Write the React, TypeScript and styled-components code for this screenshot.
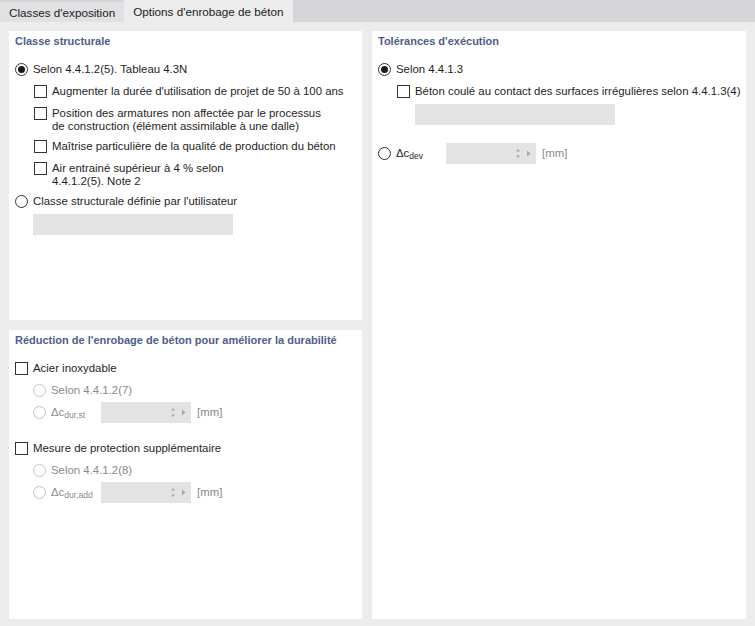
import styled, { createGlobalStyle } from "styled-components";

const GlobalStyle = createGlobalStyle`
  html, body {
    margin: 0;
    padding: 0;
  }
  body {
    background: #ececec;
    font-family: "Liberation Sans", Arial, sans-serif;
    font-size: 11px;
    color: #1e1e1e;
  }
`;

const Page = styled.div`
  width: 755px;
  height: 626px;
  display: flex;
  flex-direction: column;
  background: #ececec;
`;

const TabBar = styled.div`
  height: 22px;
  flex-shrink: 0;
  display: flex;
  align-items: flex-end;
  background: #d4d4d9;
`;

const Tab = styled.div<{ $active?: boolean }>`
  height: ${(p) => (p.$active ? 22 : 20)}px;
  padding: 0 9px;
  display: flex;
  align-items: center;
  box-sizing: border-box;
  background: ${(p) => (p.$active ? "#ececec" : "#e1e1e3")};
  color: #1a1a1a;
  font-size: 11.7px;
`;

const Body = styled.div`
  flex: 1;
  display: grid;
  grid-template-columns: 353px 374px;
  column-gap: 10px;
  padding: 9px 9px 7px 9px;
  min-height: 0;
`;

const Column = styled.div`
  display: flex;
  flex-direction: column;
  gap: 10px;
  min-height: 0;
`;

const Panel = styled.section`
  flex: 1;
  background: #ffffff;
  padding: 1px 6px;
`;

const PanelTitle = styled.div`
  font-weight: bold;
  color: #4f5d87;
  line-height: 18px;
  margin-bottom: 8px;
  white-space: nowrap;
`;

const Option = styled.div<{ $indent?: number; $disabled?: boolean }>`
  display: flex;
  align-items: flex-start;
  gap: 5px;
  min-height: 22px;
  box-sizing: border-box;
  padding: 5px 0 2px;
  margin-left: ${(p) => p.$indent ?? 0}px;
  line-height: 13px;
  font-size: 11.4px;
  white-space: nowrap;
  color: ${(p) => (p.$disabled ? "#8a8a8a" : "#1e1e1e")};
`;

const Radio = styled.span<{ $checked?: boolean; $disabled?: boolean }>`
  width: 13px;
  height: 13px;
  flex-shrink: 0;
  box-sizing: border-box;
  border-radius: 50%;
  border: 1px solid ${(p) => (p.$disabled ? "#c2c2c2" : "#333333")};
  background: #fff;
  display: flex;
  align-items: center;
  justify-content: center;

  &::after {
    content: "";
    display: ${(p) => (p.$checked ? "block" : "none")};
    width: 7px;
    height: 7px;
    border-radius: 50%;
    background: #1a1a1a;
  }
`;

const Check = styled.span`
  width: 13px;
  height: 13px;
  flex-shrink: 0;
  box-sizing: border-box;
  border: 1px solid #333333;
  background: #fff;
`;

const Field = styled.div<{ $indent?: number; $gapTop?: number }>`
  width: 200px;
  height: 21px;
  margin-left: ${(p) => p.$indent ?? 0}px;
  margin-top: ${(p) => p.$gapTop ?? 2}px;
  background: #e3e3e3;
`;

const DeltaRow = styled.div<{ $indent?: number; $gapTop?: number; $disabled?: boolean }>`
  display: flex;
  align-items: center;
  gap: 5px;
  height: 22px;
  font-size: 11.4px;
  margin-left: ${(p) => p.$indent ?? 0}px;
  margin-top: ${(p) => p.$gapTop ?? 0}px;
  color: ${(p) => (p.$disabled ? "#8a8a8a" : "#1e1e1e")};
`;

const DeltaLabel = styled.span`
  width: 45px;
  white-space: nowrap;
`;

const Sub = styled.span`
  font-size: 8.5px;
  position: relative;
  top: 2px;
`;

const SpinBox = styled.div`
  width: 90px;
  height: 21px;
  background: #e3e3e3;
  display: flex;
  align-items: center;
  justify-content: flex-end;
`;

const Unit = styled.span`
  margin-left: 1px;
  color: #8a8a8a;
`;

const Group = styled.div<{ $gapTop?: number }>`
  margin-top: ${(p) => p.$gapTop ?? 0}px;
`;

const SpinArrows = () => (
  <svg width="24" height="21" viewBox="0 0 24 21">
    <path d="M4 8.5 L6 6 L8 8.5 Z" fill="#a8a8a8" />
    <path d="M4 12.5 L6 15 L8 12.5 Z" fill="#a8a8a8" />
    <path d="M15 7.5 L18.5 10.5 L15 13.5 Z" fill="#a8a8a8" />
  </svg>
);

const Delta = ({ sub }: { sub: string }) => (
  <DeltaLabel>
    Δc<Sub>{sub}</Sub>
  </DeltaLabel>
);

const App = () => {
  return (
    <Page>
      <GlobalStyle />
      <TabBar>
        <Tab>Classes d'exposition</Tab>
        <Tab $active>Options d'enrobage de béton</Tab>
      </TabBar>
      <Body>
        <Column>
          <Panel>
            <PanelTitle>Classe structurale</PanelTitle>
            <Option>
              <Radio $checked />
              <span>Selon 4.4.1.2(5). Tableau 4.3N</span>
            </Option>
            <Option $indent={19}>
              <Check />
              <span>Augmenter la durée d'utilisation de projet de 50 à 100 ans</span>
            </Option>
            <Option $indent={19}>
              <Check />
              <span>
                Position des armatures non affectée par le processus
                <br />
                de construction (élément assimilable à une dalle)
              </span>
            </Option>
            <Option $indent={19}>
              <Check />
              <span>Maîtrise particulière de la qualité de production du béton</span>
            </Option>
            <Option $indent={19}>
              <Check />
              <span>
                Air entrainé supérieur à 4 % selon
                <br />
                4.4.1.2(5). Note 2
              </span>
            </Option>
            <Option>
              <Radio />
              <span>Classe structurale définie par l'utilisateur</span>
            </Option>
            <Field $indent={18} />
          </Panel>
          <Panel>
            <PanelTitle>Réduction de l'enrobage de béton pour améliorer la durabilité</PanelTitle>
            <Option>
              <Check />
              <span>Acier inoxydable</span>
            </Option>
            <Option $indent={18} $disabled>
              <Radio $disabled />
              <span>Selon 4.4.1.2(7)</span>
            </Option>
            <DeltaRow $indent={18} $disabled>
              <Radio $disabled />
              <Delta sub="dur,st" />
              <SpinBox>
                <SpinArrows />
              </SpinBox>
              <Unit>[mm]</Unit>
            </DeltaRow>
            <Group $gapTop={14}>
              <Option>
                <Check />
                <span>Mesure de protection supplémentaire</span>
              </Option>
              <Option $indent={18} $disabled>
                <Radio $disabled />
                <span>Selon 4.4.1.2(8)</span>
              </Option>
              <DeltaRow $indent={18} $disabled>
                <Radio $disabled />
                <Delta sub="dur,add" />
                <SpinBox>
                  <SpinArrows />
                </SpinBox>
                <Unit>[mm]</Unit>
              </DeltaRow>
            </Group>
          </Panel>
        </Column>
        <Column>
          <Panel>
            <PanelTitle>Tolérances d'exécution</PanelTitle>
            <Option>
              <Radio $checked />
              <span>Selon 4.4.1.3</span>
            </Option>
            <Option $indent={19}>
              <Check />
              <span>Béton coulé au contact des surfaces irrégulières selon 4.4.1.3(4)</span>
            </Option>
            <Field $indent={37} />
            <DeltaRow $gapTop={17}>
              <Radio />
              <Delta sub="dev" />
              <SpinBox>
                <SpinArrows />
              </SpinBox>
              <Unit>[mm]</Unit>
            </DeltaRow>
          </Panel>
        </Column>
      </Body>
    </Page>
  );
};

export default App;
